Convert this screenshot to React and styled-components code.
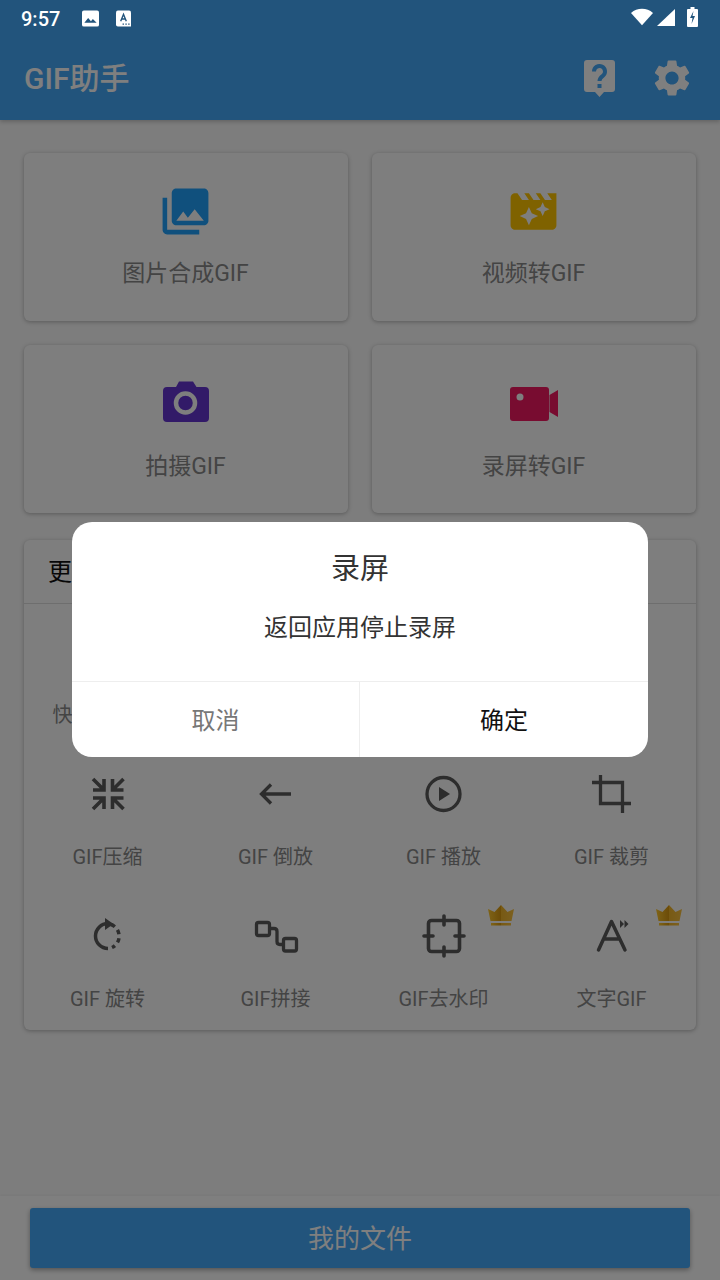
import React from 'react';
import styled, { createGlobalStyle } from 'styled-components';
import { MdPhotoLibrary, MdMovieFilter, MdSettings } from 'react-icons/md';

const FONT = `Roboto, "Noto Sans CJK SC", sans-serif`;

const GlobalStyle = createGlobalStyle`
  html, body { margin: 0; padding: 0; }
  body { font-family: ${FONT}; background: #fafafa; }
  * { box-sizing: border-box; }
`;

const Page = styled.div`
  position: relative;
  width: 720px;
  height: 1280px;
  display: flex;
  flex-direction: column;
  overflow: hidden;
  background: #fafafa;
`;

const StatusBar = styled.div`
  position: relative;
  z-index: 3;
  height: 40px;
  flex: none;
  display: flex;
  align-items: center;
  padding: 0 22px 6px 21px;
  background: #22547c;
  color: #fff;
`;

const Time = styled.span`
  font-size: 20px;
  font-weight: 500;
  width: 61px;
  margin-top: 3px;
`;

const StatusLeft = styled.div`
  display: flex;
  align-items: center;
  gap: 17px;
  margin-top: 3px;
  svg { display: block; }
`;

const StatusRight = styled.div`
  margin-left: auto;
  display: flex;
  align-items: center;
  gap: 4px;
  svg { display: block; }
`;

const Toolbar = styled.header`
  height: 80px;
  flex: none;
  display: flex;
  align-items: center;
  padding: 0 26px 4px 24px;
  background: #44a8f8;
  color: #fff;
  box-shadow: 0 2px 4px rgba(0, 0, 0, 0.2);
`;

const Title = styled.h1`
  margin: 0 0 4px;
  font-size: 30px;
  font-weight: 500;
  flex: 1;
`;

const ToolIcons = styled.div`
  display: flex;
  align-items: center;
  gap: 35px;
  svg { display: block; }
`;

const Tiles = styled.div`
  display: grid;
  grid-template-columns: 1fr 1fr;
  gap: 24px;
  padding: 33px 24px 0;
`;

const Tile = styled.div`
  height: 168px;
  display: flex;
  flex-direction: column;
  align-items: center;
  padding: 31px 1px 0 0;
  background: #fdfdfd;
  border-radius: 6px;
  box-shadow: 0 1px 4px rgba(0, 0, 0, 0.28);
  svg { display: block; }
`;

const TileLabel = styled.div`
  margin-top: 20px;
  font-size: 23px;
  line-height: 30px;
  color: #888;
`;

const Section = styled.section`
  margin: 27px 24px 0;
  background: #fdfdfd;
  border-radius: 6px;
  box-shadow: 0 1px 4px rgba(0, 0, 0, 0.28);
`;

const SectionHead = styled.div`
  height: 64px;
  display: flex;
  align-items: center;
  padding: 0 0 4px 24px;
  font-size: 24px;
  color: #111;
  border-bottom: 1px solid #ddd;
`;

const ToolGrid = styled.div`
  display: grid;
  grid-template-columns: repeat(4, 1fr);
  grid-auto-rows: 142px;
`;

const ToolCell = styled.div`
  position: relative;
  display: flex;
  flex-direction: column;
  align-items: center;
  padding: 24px 1px 0 0;
  svg { display: block; }
`;

const ToolLabel = styled.div`
  margin-top: 25px;
  font-size: 20px;
  line-height: 28px;
  color: #888;
  white-space: nowrap;
`;

const Crown = styled.svg`
  position: absolute;
  left: 128px;
  top: 17px;
`;

const BottomBar = styled.div`
  margin-top: auto;
  height: 84px;
  padding: 12px 30px;
  background: #fff;
  box-shadow: 0 -1px 2px rgba(0, 0, 0, 0.04);
`;

const MainButton = styled.div`
  height: 60px;
  display: flex;
  align-items: center;
  justify-content: center;
  padding-bottom: 4px;
  background: #44a8f8;
  color: #fff;
  font-size: 26px;
  border-radius: 3px;
  box-shadow: 0 2px 5px rgba(0, 0, 0, 0.35);
`;

const Overlay = styled.div`
  position: absolute;
  inset: 0;
  z-index: 2;
  display: flex;
  align-items: center;
  justify-content: center;
  padding-bottom: 2px;
  background: rgba(0, 0, 0, 0.5);
`;

const Dialog = styled.div`
  width: 576px;
  height: 235px;
  display: flex;
  flex-direction: column;
  background: #fff;
  border-radius: 20px;
  overflow: hidden;
  text-align: center;
`;

const DialogTitle = styled.div`
  padding-top: 27px;
  font-size: 29px;
  line-height: 40px;
  color: #333;
`;

const DialogText = styled.div`
  margin-top: 22px;
  font-size: 24px;
  line-height: 34px;
  color: #333;
`;

const DialogActions = styled.div`
  margin-top: auto;
  height: 76px;
  display: grid;
  grid-template-columns: 1fr 1fr;
  border-top: 1px solid #eee;
`;

const DialogButton = styled.div`
  display: flex;
  align-items: center;
  justify-content: center;
  padding-bottom: 2px;
  font-size: 24px;
  color: ${({ $primary }) => ($primary ? '#111' : '#777')};
  border-right: ${({ $primary }) => ($primary ? 'none' : '1px solid #eee')};
`;

const INK = '#5a5a5a';

const Line = ({ children, width = 3.3 }) => (
  <svg width="48" height="48" viewBox="0 0 48 48" fill="none" stroke={INK} strokeWidth={width}>
    {children}
  </svg>
);

const CompressIcon = () => (
  <Line width={3.6}>
    <path d="M20 9v11H9M9 9l11 11" />
    <path d="M28.500 9v11H39.500M39.500 9L28.500 20" />
    <path d="M20 39V28H9M9 39l11-11" />
    <path d="M28.500 39V28H39.500M39.500 39L28.500 28" />
  </Line>
);

const BackIcon = () => (
  <Line>
    <path d="M10 24h29M19 14.500L9.500 24l9.500 9.500" />
  </Line>
);

const PlayIcon = () => (
  <Line>
    <circle cx="23.500" cy="24" r="16.500" />
    <path d="M19 17l11 7-11 7z" fill={INK} stroke="none" />
  </Line>
);

const CropIcon = () => (
  <Line>
    <path d="M12.500 5v28.500H43" />
    <path d="M4 12.500h30.500V43" />
  </Line>
);

const RotateIcon = () => (
  <Line width={3.5}>
    <path d="M24 11.500A12.500 12.500 0 1 0 24 36.500" />
    <path d="M27 12.500A12.500 12.500 0 0 1 28 35.500" strokeDasharray="4.500 4" />
    <path d="M21 6l8.500 6-8.500 6z" fill={INK} stroke="none" />
  </Line>
);

const JoinIcon = () => (
  <Line>
    <rect x="4.500" y="10.500" width="13" height="13" rx="2" />
    <rect x="31.500" y="26.500" width="13" height="12.500" rx="2" />
    <path d="M18 16.500h4q3 0 3 3v10q0 3 3 3h3" />
  </Line>
);

const WatermarkIcon = () => (
  <Line width={3.6}>
    <rect x="8.500" y="8.500" width="31" height="31" rx="3" />
    <path d="M24 4v9M24 35v9M4 24h9M35 24h9" strokeLinecap="round" />
  </Line>
);

const TextIcon = () => (
  <Line width={3.5}>
    <path d="M10.500 38L23.500 9.500 37 38M15.500 27h16" strokeLinecap="round" strokeLinejoin="round" />
    <path d="M32 8l4 4-4 4zM36.500 8l4 4-4 4z" fill={INK} stroke="none" />
  </Line>
);

const CrownBadge = ({ id }) => (
  <Crown width="26" height="21" viewBox="0 0 26 21">
    <defs>
      <linearGradient id={id} x1="0" x2="1" y1="0" y2="0">
        <stop offset="0" stopColor="#ffc830" />
        <stop offset="0.5" stopColor="#d89810" />
        <stop offset="0.5" stopColor="#f0b428" />
        <stop offset="1" stopColor="#f8c040" />
      </linearGradient>
    </defs>
    <path d="M0 4l6.500 3L13 0l6.500 7L26 4l-2.500 12h-21z" fill={`url(#${id})`} />
    <rect x="3" y="18" width="20" height="2.500" fill={`url(#${id})`} />
  </Crown>
);

const CameraIcon = () => (
  <svg width="56" height="56" viewBox="0 0 56 56">
    <path d="M9 11h9l3-5.500h14l3.500 5.500H47a4 4 0 0 1 4 4v27a4 4 0 0 1-4 4H9a4 4 0 0 1-4-4V15a4 4 0 0 1 4-4z" fill="#6535d0" />
    <circle cx="27.500" cy="27" r="9.500" fill="none" stroke="#fdfdfd" strokeWidth="4.500" />
  </svg>
);

const VideoIcon = () => (
  <svg width="56" height="56" viewBox="0 0 56 56">
    <rect x="4" y="11" width="39" height="34" rx="3" fill="#f01860" />
    <path d="M43.500 19l8.500-5v27l-8.500-5z" fill="#f01860" />
    <circle cx="14" cy="21" r="3.500" fill="#fdfdfd" />
  </svg>
);

const HelpIcon = () => (
  <svg width="31" height="37" viewBox="0 0 31 37">
    <path d="M3 0h25a3 3 0 0 1 3 3v26a3 3 0 0 1-3 3h-8l-4.500 5-4.500-5H3a3 3 0 0 1-3-3V3a3 3 0 0 1 3-3z" fill="#fff" />
    <path d="M10 11.500a5.500 5.500 0 1 1 8.800 4.400c-2 1.500-3.300 2.500-3.300 5.100" fill="none" stroke="#44a8f8" strokeWidth="4" />
    <rect x="13.500" y="24" width="4" height="4" fill="#44a8f8" />
  </svg>
);

const tiles = [
  { label: '图片合成GIF', icon: <MdPhotoLibrary size={55} color="#20a0fb" /> },
  { label: '视频转GIF', icon: <MdMovieFilter size={55} color="#ffc400" /> },
  { label: '拍摄GIF', icon: <CameraIcon /> },
  { label: '录屏转GIF', icon: <VideoIcon /> },
];

const tools = [
  { label: '快手视频GIF' },
  { label: '' },
  { label: '' },
  { label: '' },
  { label: 'GIF压缩', icon: <CompressIcon /> },
  { label: 'GIF 倒放', icon: <BackIcon /> },
  { label: 'GIF 播放', icon: <PlayIcon /> },
  { label: 'GIF 裁剪', icon: <CropIcon /> },
  { label: 'GIF 旋转', icon: <RotateIcon /> },
  { label: 'GIF拼接', icon: <JoinIcon /> },
  { label: 'GIF去水印', icon: <WatermarkIcon />, vip: true },
  { label: '文字GIF', icon: <TextIcon />, vip: true },
];

const App = () => (
  <Page>
    <GlobalStyle />
    <StatusBar>
      <Time>9:57</Time>
      <StatusLeft>
        <svg width="17" height="17" viewBox="0 0 18 17">
          <rect width="18" height="17" rx="2" fill="#fff" />
          <path d="M2.500 13l4-5 3 3.500 2-2.500 4 4z" fill="#22547c" />
        </svg>
        <svg width="15" height="17" viewBox="0 0 16 17">
          <path d="M2 0h12a2 2 0 0 1 2 2v15H2a2 2 0 0 1-2-2V2a2 2 0 0 1 2-2z" fill="#fff" />
          <path d="M5 11.500L8 4l3 7.500M6 9h4" fill="none" stroke="#22547c" strokeWidth="1.500" />
          <path d="M7 14.500h1.500M10 14.500h1.500M13 14.500h1.500" stroke="#22547c" strokeWidth="1.200" />
        </svg>
      </StatusLeft>
      <StatusRight>
        <svg width="22" height="18" viewBox="0 0 24 18">
          <path d="M0 4.500C3.500 1.500 7.500 0 12 0s8.500 1.500 12 4.500L12 18z" fill="#fff" />
        </svg>
        <svg width="18" height="17" viewBox="0 0 18 17">
          <path d="M18 0v17H0z" fill="#fff" />
        </svg>
        <svg width="11" height="20" viewBox="0 0 11 20" style={{ marginLeft: 8 }}>
          <path d="M3.500 0h4v2H10a1 1 0 0 1 1 1v16a1 1 0 0 1-1 1H1a1 1 0 0 1-1-1V3a1 1 0 0 1 1-1h2.500z" fill="#fff" />
          <path d="M6.500 4L3 11h2.500L4.500 17 8 9H5.500z" fill="#22547c" />
        </svg>
      </StatusRight>
    </StatusBar>
    <Toolbar>
      <Title>GIF助手</Title>
      <ToolIcons>
        <HelpIcon />
        <MdSettings size={44} color="#fff" />
      </ToolIcons>
    </Toolbar>
    <Tiles>
      {tiles.map((t) => (
        <Tile key={t.label}>
          {t.icon}
          <TileLabel>{t.label}</TileLabel>
        </Tile>
      ))}
    </Tiles>
    <Section>
      <SectionHead>更多功能</SectionHead>
      <ToolGrid>
        {tools.map((t, i) => (
          <ToolCell key={i}>
            {t.icon || <svg width="48" height="48" />}
            <ToolLabel>{t.label}</ToolLabel>
            {t.vip && <CrownBadge id={`crown-${i}`} />}
          </ToolCell>
        ))}
      </ToolGrid>
    </Section>
    <BottomBar>
      <MainButton>我的文件</MainButton>
    </BottomBar>
    <Overlay>
      <Dialog>
        <DialogTitle>录屏</DialogTitle>
        <DialogText>返回应用停止录屏</DialogText>
        <DialogActions>
          <DialogButton>取消</DialogButton>
          <DialogButton $primary>确定</DialogButton>
        </DialogActions>
      </Dialog>
    </Overlay>
  </Page>
);

export default App;
